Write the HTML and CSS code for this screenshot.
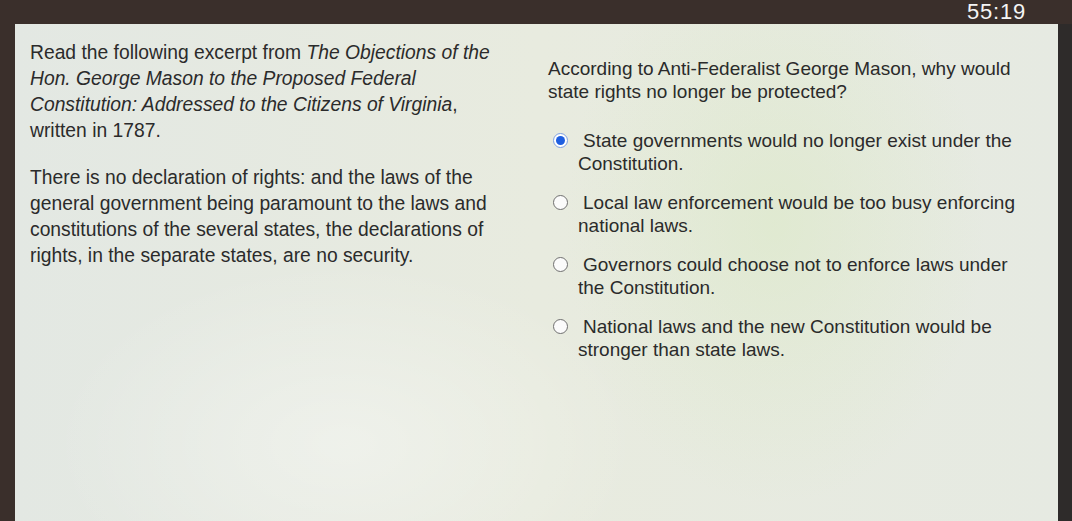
FILE: index.html
```html
<!DOCTYPE html>
<html lang="en">
<head>
<meta charset="utf-8">
<title>Question</title>
<link rel="stylesheet" href="styles.css">
</head>
<body>
<div class="topbar">
  <span class="timer">55:19</span>
</div>
<div class="frame">
  <main class="panel">
    <section class="passage">
      <p class="intro">Read the following excerpt from <i>The Objections of the<br>Hon. George Mason to the Proposed Federal<br>Constitution: Addressed to the Citizens of Virginia</i>,<br>written in 1787.</p>
      <p class="quote">There is no declaration of rights: and the laws of the<br>general government being paramount to the laws and<br>constitutions of the several states, the declarations of<br>rights, in the separate states, are no security.</p>
    </section>
    <section class="question">
      <p class="prompt">According to Anti-Federalist George Mason, why would<br>state rights no longer be protected?</p>
      <ul class="options">
        <li class="option"><span class="radio checked"></span><span class="label">State governments would no longer exist under the<br>Constitution.</span></li>
        <li class="option"><span class="radio"></span><span class="label">Local law enforcement would be too busy enforcing<br>national laws.</span></li>
        <li class="option"><span class="radio"></span><span class="label">Governors could choose not to enforce laws under<br>the Constitution.</span></li>
        <li class="option"><span class="radio"></span><span class="label">National laws and the new Constitution would be<br>stronger than state laws.</span></li>
      </ul>
    </section>
  </main>
  <div class="edge"></div>
</div>
</body>
</html>
```
FILE: styles.css
```css
html, body {
  margin: 0;
  padding: 0;
  height: 100%;
}
body {
  background: #3a2f2b;
  font-family: "Liberation Sans", Arial, sans-serif;
  color: #2b2b2b;
  overflow: hidden;
}
.topbar {
  height: 24px;
  display: flex;
  justify-content: flex-end;
  align-items: flex-start;
  padding-right: 46px;
}
.timer {
  color: #f4f4f4;
  font-size: 22px;
  line-height: 24px;
  letter-spacing: 0.8px;
}
.frame {
  display: flex;
  height: calc(100% - 24px);
  padding-left: 15px;
}
.panel {
  flex: 1;
  display: flex;
  background:
    radial-gradient(ellipse 420px 260px at 330px 420px, rgba(255,255,255,0.35), rgba(255,255,255,0) 70%),
    radial-gradient(ellipse 300px 400px at 760px 200px, rgba(215,232,190,0.45), rgba(215,232,190,0) 70%),
    linear-gradient(90deg, #e3e8e3 0%, #e8ebdf 50%, #e6eae2 100%);
  padding: 16px 0 0 15px;
}
.edge {
  width: 14px;
  background: #2e2b2a;
}
.passage {
  width: 518px;
  font-size: 19.3px;
  line-height: 26px;
}
.passage p {
  margin: 0;
  white-space: nowrap;
}
.quote {
  margin-top: 21px !important;
}
.question {
  margin-top: 17px;
  width: 500px;
  font-size: 19px;
  line-height: 23px;
}
.prompt {
  margin: 0 0 26px 0;
  white-space: nowrap;
}
.options {
  list-style: none;
  margin: 0;
  padding: 0;
  display: flex;
  flex-direction: column;
  gap: 16px;
}
.option {
  position: relative;
  padding-left: 30px;
  white-space: nowrap;
}
.label {
  display: block;
  text-indent: 5px;
}
.radio {
  position: absolute;
  left: 5px;
  top: 4px;
  width: 13px;
  height: 13px;
  border: 1.5px solid #6f6f6f;
  border-radius: 50%;
  background: #fbfbfb;
  box-sizing: content-box;
}
.radio.checked {
  border-color: #7e9fe0;
  background: #fff;
}
.radio.checked::after {
  content: "";
  position: absolute;
  left: 2px;
  top: 2px;
  width: 9px;
  height: 9px;
  border-radius: 50%;
  background: #1f5fe0;
}
```
